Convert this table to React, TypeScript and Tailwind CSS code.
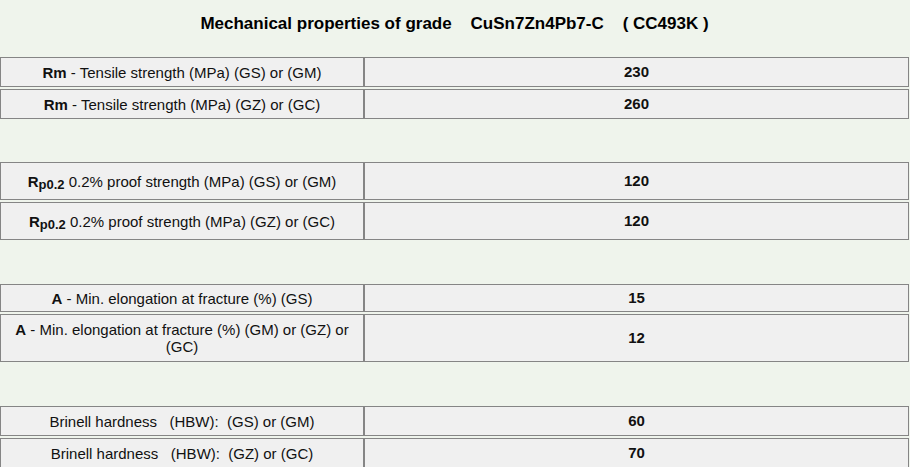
import React from 'react';

type Row = { label: React.ReactNode; value: string; h: string };

const Rp = () => (
  <>
    <b>R</b>
    <sub className="text-[13px] font-bold relative top-[2px]">p0.2</sub>
  </>
);

const groups: { gap: string; rows: Row[] }[] = [
  {
    gap: '',
    rows: [
      { label: <><b>Rm</b> - Tensile strength (MPa) (GS) or (GM)</>, value: '230', h: 'h-[30px]' },
      { label: <><b>Rm</b> - Tensile strength (MPa) (GZ) or (GC)</>, value: '260', h: 'h-[30px]' },
    ],
  },
  {
    gap: 'mt-[43px]',
    rows: [
      { label: <><Rp /> 0.2% proof strength (MPa) (GS) or (GM)</>, value: '120', h: 'h-[38px]' },
      { label: <><Rp /> 0.2% proof strength (MPa) (GZ) or (GC)</>, value: '120', h: 'h-[38px]' },
    ],
  },
  {
    gap: 'mt-[44px]',
    rows: [
      { label: <><b>A</b> - Min. elongation at fracture (%) (GS)</>, value: '15', h: 'h-[28px]' },
      { label: <><b>A</b> - Min. elongation at fracture (%) (GM) or (GZ) or (GC)</>, value: '12', h: 'h-[48px]' },
    ],
  },
  {
    gap: 'mt-[44px]',
    rows: [
      { label: <>Brinell hardness&nbsp;&nbsp; (HBW):&nbsp; (GS) or (GM)</>, value: '60', h: 'h-[30px]' },
      { label: <>Brinell hardness&nbsp;&nbsp; (HBW):&nbsp; (GZ) or (GC)</>, value: '70', h: 'h-[30px]' },
    ],
  },
];

const App: React.FC = () => {
  return (
    <div className="min-h-screen bg-[#eff4ec] pr-[1px] text-[15px] text-black font-['Liberation_Sans',Arial,sans-serif]">
      <h1 className="pt-[14px] h-[57px] text-center text-[17px] font-bold leading-[20px]">
        Mechanical properties of grade&nbsp;&nbsp;&nbsp; CuSn7Zn4Pb7-C&nbsp;&nbsp;&nbsp; ( CC493K )
      </h1>

      {groups.map((g, gi) => (
        <div key={gi} className={`flex flex-col gap-[2px] ${g.gap}`}>
          {g.rows.map((r, ri) => (
            <div key={ri} className={`flex ${r.h} bg-[#f0f0f0] text-[#111]`}>
              <div className="w-[364px] flex items-center justify-center text-center px-[12px] leading-[17px] border border-[#858585]">
                <span>{r.label}</span>
              </div>
              <div className="flex-1 flex items-center justify-center font-bold border border-[#858585]">
                {r.value}
              </div>
            </div>
          ))}
        </div>
      ))}
    </div>
  );
};

export default App;
